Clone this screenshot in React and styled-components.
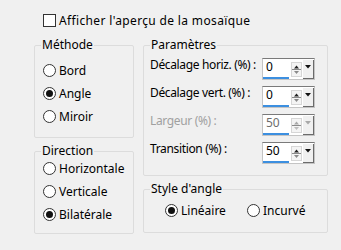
import styled, { createGlobalStyle } from 'styled-components';

const GlobalStyle = createGlobalStyle`
  html, body {
    margin: 0;
    background: #f0f0f0;
  }
  body {
    font-family: "Noto Sans", "Liberation Sans", sans-serif;
    font-size: 12px;
    color: #000;
  }
`;

const Dialog = styled.div`
  width: 341px;
  height: 250px;
  box-sizing: border-box;
  padding: 11px 0 0 34px;
`;

const CheckRow = styled.label`
  display: flex;
  align-items: center;
  gap: 3px;
  height: 19px;
  margin-left: 9px;
  letter-spacing: 0.35px;
  white-space: nowrap;
`;

const CheckBox = styled.span`
  width: 13px;
  height: 13px;
  box-sizing: border-box;
  border: 1px solid #333;
  background: #fff;
`;

const Columns = styled.div`
  display: grid;
  grid-template-columns: 100px 185px;
  column-gap: 9px;
  margin-top: 7px;
`;

const Column = styled.div`
  display: flex;
  flex-direction: column;
  gap: 5px;
`;

const Group = styled.fieldset`
  margin: 0;
  padding: 0 6px 0 ${(p) => p.$indent || 8}px;
  height: ${(p) => p.$height}px;
  box-sizing: border-box;
  border: 1px solid #dcdcdc;
  border-radius: 2px;
  min-width: 0;
`;

const Legend = styled.legend`
  padding: 0 1px;
  margin-left: ${(p) => p.$shift || 0}px;
  line-height: 16px;
  height: 16px;
  white-space: nowrap;
`;

const RadioList = styled.div`
  display: flex;
  flex-direction: column;
  margin-top: ${(p) => p.$lead}px;
`;

const RadioItem = styled.label`
  display: flex;
  align-items: center;
  gap: 3px;
  height: 23px;
  white-space: nowrap;
`;

const RadioCircle = styled.span`
  width: 13px;
  height: 13px;
  flex: none;
  box-sizing: border-box;
  border: 1px solid #333;
  border-radius: 50%;
  background: #fff;
  display: flex;
  align-items: center;
  justify-content: center;
  &::after {
    content: '';
    width: 7px;
    height: 7px;
    border-radius: 50%;
    background: ${(p) => (p.$checked ? '#111' : 'transparent')};
  }
`;

const Radio = ({ label, checked }) => (
  <RadioItem>
    <RadioCircle $checked={checked} />
    <span>{label}</span>
  </RadioItem>
);

const ParamRows = styled.div`
  display: flex;
  flex-direction: column;
  gap: 6px;
  margin-top: 5px;
`;

const ParamRow = styled.div`
  display: flex;
  align-items: flex-start;
  height: 22px;
`;

const ParamLabel = styled.span`
  width: 112px;
  flex: none;
  line-height: 14px;
  white-space: nowrap;
  letter-spacing: -0.35px;
  color: ${(p) => (p.$disabled ? '#a0a0a0' : '#000')};
`;

const SpinBox = styled.div`
  display: flex;
  width: 53px;
  height: 22px;
  box-sizing: border-box;
  border: 1px solid #c4c4c4;
  border-top-color: #7a7a7a;
  background: #fff;
`;

const SpinValue = styled.span`
  width: 23px;
  height: 18px;
  padding-left: 3px;
  line-height: 16px;
  border-bottom: 2px solid #3c8fe0;
  color: ${(p) => (p.$disabled ? '#6d6d6d' : '#000')};
`;

const Arrows = styled.svg`
  margin-left: 2px;
  flex: none;
`;

const DropButton = styled.span`
  width: 11px;
  height: 19px;
  box-sizing: border-box;
  margin-top: 1px;
  margin-left: auto;
  background: #f0f0f0;
  border-right: 1px solid #6b6b6b;
  border-bottom: 1px solid #6b6b6b;
  display: flex;
  justify-content: center;
  padding-top: 5px;
`;

const Spin = ({ value, disabled }) => {
  const ink = disabled ? '#a8a8a8' : '#222';
  return (
    <SpinBox>
      <SpinValue $disabled={disabled}>{value}</SpinValue>
      <Arrows width="12" height="20" viewBox="0 0 12 20">
        <rect x="0.5" y="3.5" width="10" height="14" fill="#f4f4f4" stroke="#d6d6d6" />
        <path d="M3 9.5 L5.5 6.5 L8 9.5 Z" fill={ink} />
        <line x1="1" y1="10.5" x2="10" y2="10.5" stroke="#8a8a8a" />
        <path d="M3 12 L5.5 15 L8 12 Z" fill={disabled ? '#bdbdbd' : '#8a8a8a'} />
      </Arrows>
      <DropButton>
        <svg width="6" height="4" viewBox="0 0 6 4">
          <path d="M0 0 H6 L3 3.5 Z" fill={disabled ? '#a8a8a8' : '#111'} />
        </svg>
      </DropButton>
    </SpinBox>
  );
};

const AngleRow = styled.div`
  display: grid;
  grid-template-columns: 82px auto;
  margin: 2px 0 0 15px;
`;

const params = [
  { label: 'Décalage horiz. (%) :', value: '0' },
  { label: 'Décalage vert. (%) :', value: '0' },
  { label: 'Largeur (%) :', value: '50', disabled: true },
  { label: 'Transition (%) :', value: '50' },
];

export default function App() {
  return (
    <>
      <GlobalStyle />
      <Dialog>
        <CheckRow>
          <CheckBox />
          <span>Afficher l'aperçu de la mosaïque</span>
        </CheckRow>
        <Columns>
          <Column>
            <Group $height={101}>
              <Legend $shift={-2}>Méthode</Legend>
              <RadioList $lead={6}>
                <Radio label="Bord" />
                <Radio label="Angle" checked />
                <Radio label="Miroir" />
              </RadioList>
            </Group>
            <Group $height={91}>
              <Legend $shift={-2}>Direction</Legend>
              <RadioList $lead={-2}>
                <Radio label="Horizontale" />
                <Radio label="Verticale" />
                <Radio label="Bilatérale" checked />
              </RadioList>
            </Group>
          </Column>
          <Column>
            <Group $height={139} $indent={6}>
              <Legend>Paramètres</Legend>
              <ParamRows>
                {params.map((p) => (
                  <ParamRow key={p.label}>
                    <ParamLabel $disabled={p.disabled}>{p.label}</ParamLabel>
                    <Spin value={p.value} disabled={p.disabled} />
                  </ParamRow>
                ))}
              </ParamRows>
            </Group>
            <Group $height={52} $indent={6}>
              <Legend>Style d'angle</Legend>
              <AngleRow>
                <Radio label="Linéaire" checked />
                <Radio label="Incurvé" />
              </AngleRow>
            </Group>
          </Column>
        </Columns>
      </Dialog>
    </>
  );
}
